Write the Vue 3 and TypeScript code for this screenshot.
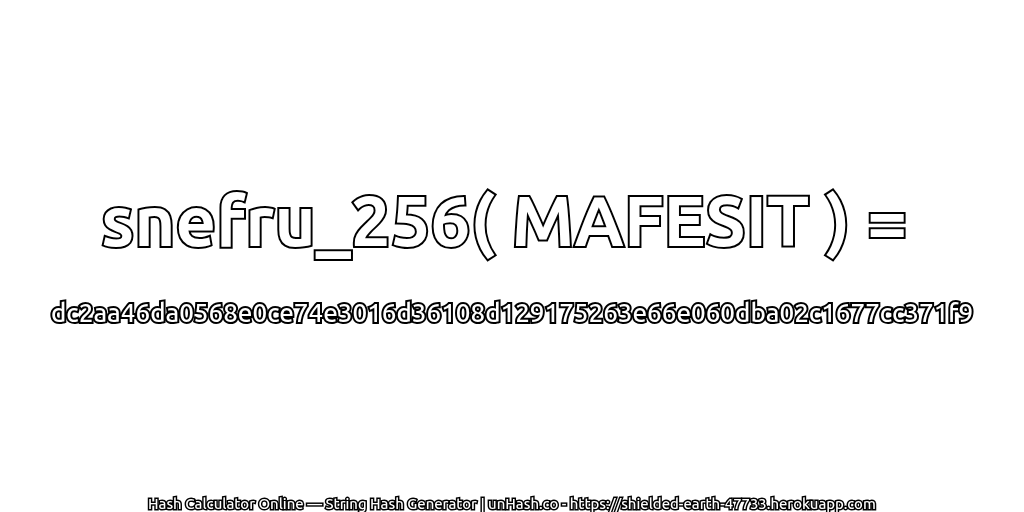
<script setup lang="ts">
const title = "snefru_256( MAFESIT ) = ";
const hash = "dc2aa46da0568e0ce74e3016d36108d129175263e66e060dba02c1677cc371f9";
const footer = "Hash Calculator Online — String Hash Generator | unHash.co - https://shielded-earth-47733.herokuapp.com";
</script>

<template>
  <main class="page">
    <div class="center">
      <h1 class="title">{{ title }}</h1>
      <p class="hash">{{ hash }}</p>
    </div>
    <footer class="footer">{{ footer }}</footer>
  </main>
</template>

<style>
html, body { margin: 0; background: #fff; }
</style>

<style scoped>
.page {
  width: 1024px;
  height: 512px;
  overflow: hidden;
  display: flex;
  flex-direction: column;
  align-items: center;
  font-family: "Ubuntu", "DejaVu Sans", sans-serif;
  background: #fff;
  color: #fff;
}
.center {
  display: flex;
  flex-direction: column;
  align-items: center;
  padding-top: 178px;
  gap: 36px;
  flex: 1;
}
.title, .hash, .footer {
  margin: 0;
  white-space: pre;
  -webkit-text-stroke-color: #000;
  paint-order: stroke fill;
  will-change: transform;
}
.title { font-size: 70.6px; font-weight: 700; -webkit-text-stroke-width: 4px; line-height: 84px; }
.hash { font-size: 26px; font-weight: 500; -webkit-text-stroke-width: 4px; line-height: 30px; }
.footer { font-size: 14.9px; font-weight: 500; -webkit-text-stroke-width: 3px; line-height: 17px; }
</style>
